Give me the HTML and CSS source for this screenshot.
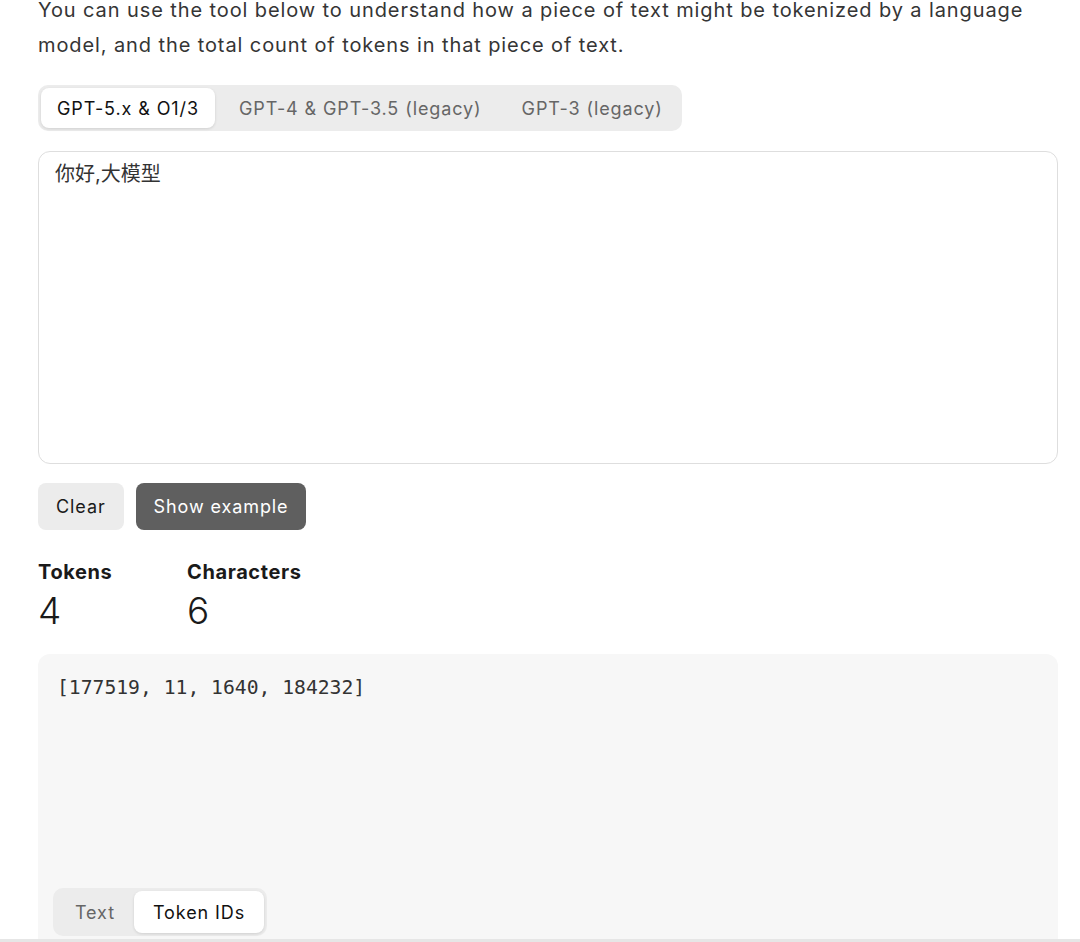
FILE: index.html
```html
<!DOCTYPE html>
<html lang="en">

<head>
    <meta charset="UTF-8">
    <meta name="viewport" content="width=device-width, initial-scale=1.0">
    <title>Tokenizer</title>
    <link rel="stylesheet" href="styles.css">
</head>

<body>
    <div class="container">
        <p class="intro">You can use the tool below to understand how a piece of text might be tokenized by a language model, and the total count of tokens in that piece of text.</p>

        <div class="segmented model-tabs">
            <button class="seg active">GPT-5.x &amp; O1/3</button>
            <button class="seg">GPT-4 &amp; GPT-3.5 (legacy)</button>
            <button class="seg">GPT-3 (legacy)</button>
        </div>

        <div class="input-box">你好,大模型</div>

        <div class="actions">
            <button class="btn btn-light">Clear</button>
            <button class="btn btn-dark">Show example</button>
        </div>

        <div class="stats">
            <div class="stat">
                <div class="stat-label">Tokens</div>
                <div class="stat-value">4</div>
            </div>
            <div class="stat">
                <div class="stat-label">Characters</div>
                <div class="stat-value">6</div>
            </div>
        </div>

        <div class="output-box">
            <pre class="token-ids">[177519, 11, 1640, 184232]</pre>
            <div class="segmented view-tabs">
                <button class="seg">Text</button>
                <button class="seg active">Token IDs</button>
            </div>
        </div>
    </div>
    <div class="bottom-edge"></div>
</body>

</html>
```
FILE: styles.css
```css
body {
    font-family: Inter, "Noto Sans CJK SC", sans-serif;
    margin: 0;
    padding: 0;
    background-color: white;
    color: #1a1a1a;
    overflow: hidden;
}

.container {
    width: 1020px;
    margin-left: 38px;
}

.intro {
    margin: -7px 0 22px 0;
    font-size: 20px;
    letter-spacing: 0.9px;
    line-height: 35px;
    color: #353535;
}

/* pill style tab switcher */
.segmented {
    display: inline-flex;
    gap: 8px;
    padding: 3px;
    background-color: #ececec;
    border-radius: 10px;
}

.seg {
    font-family: inherit;
    font-size: 18px;
    letter-spacing: 0.9px;
    color: #666;
    background: none;
    border: none;
    border-radius: 8px;
    padding: 0 16px;
    height: 40px;
    cursor: pointer;
}

.seg.active {
    background-color: white;
    color: #111;
    box-shadow: 0 1px 3px rgba(0, 0, 0, 0.12);
}

.input-box {
    margin-top: 20px;
    height: 313px;
    box-sizing: border-box;
    border: 1px solid #dedede;
    border-radius: 12px;
    padding: 6px 16px;
    font-size: 20px;
    color: #333;
}

.actions {
    display: flex;
    gap: 12px;
    margin-top: 19px;
}

.btn {
    font-family: inherit;
    font-size: 18px;
    letter-spacing: 0.9px;
    height: 47px;
    padding: 0 18px;
    border: none;
    border-radius: 8px;
    cursor: pointer;
}

.btn-light {
    background-color: #ececec;
    color: #1a1a1a;
}

.btn-dark {
    background-color: #5f5f5f;
    color: white;
}

.stats {
    display: flex;
    margin-top: 30px;
}

.stat {
    width: 149px;
}

.stat-label {
    font-size: 20px;
    font-weight: 700;
    letter-spacing: 0.6px;
    line-height: 24px;
}

.stat-value {
    margin-top: 5px;
    font-size: 37px;
    font-weight: 300;
    line-height: 44px;
    color: #1a1a1a;
}

.output-box {
    margin-top: 21px;
    height: 315px;
    background-color: #f7f7f7;
    border-radius: 12px;
    padding: 18px 15px;
    box-sizing: border-box;
    display: flex;
    flex-direction: column;
    align-items: flex-start;
}

.token-ids {
    margin: 0 0 0 4px;
    font-family: "DejaVu Sans Mono", monospace;
    font-size: 19.7px;
    line-height: 32px;
    color: #333;
    flex-grow: 1;
}

.view-tabs {
    gap: 0;
    margin-bottom: 15px;
}

.view-tabs .seg {
    height: 42px;
    padding: 0 19px;
}

.bottom-edge {
    position: fixed;
    left: 0;
    right: 0;
    bottom: 0;
    height: 3px;
    background-color: #e6e6e6;
}
```
